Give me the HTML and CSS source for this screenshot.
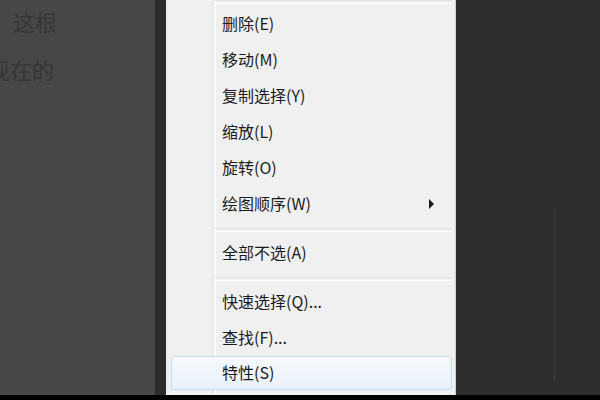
FILE: index.html
```html
<!DOCTYPE html>
<html lang="zh-CN">
<head>
  <meta charset="UTF-8" />
  <title>右键菜单</title>
  <link rel="stylesheet" href="styles.css">
</head>
<body>

<div class="screen">
  <div class="doc">
    <p class="doc-line first">这根</p>
    <p class="doc-line second">现在的</p>
  </div>

  <div class="edge"></div>

  <div class="menu">
    <div class="sep top"></div>
    <div class="item">删除(E)</div>
    <div class="item">移动(M)</div>
    <div class="item">复制选择(Y)</div>
    <div class="item">缩放(L)</div>
    <div class="item">旋转(O)</div>
    <div class="item has-sub">绘图顺序(W)<span class="arrow"></span></div>
    <div class="sep"></div>
    <div class="item">全部不选(A)</div>
    <div class="sep"></div>
    <div class="item">快速选择(Q)...</div>
    <div class="item">查找(F)...</div>
    <div class="item active">特性(S)</div>
  </div>

  <div class="canvas">
    <div class="cursor-line"></div>
  </div>
</div>
<div class="taskbar"></div>

</body>
</html>
```

FILE: styles.css
```css
* { box-sizing: border-box; }

body {
  margin: 0;
  width: 600px;
  height: 400px;
  overflow: hidden;
  font-family: "Noto Sans", "Noto Sans CJK SC", sans-serif;
  background-color: #000;
}

.screen {
  display: flex;
  height: 395px;
}

.taskbar {
  height: 5px;
  background-color: #000;
}

/* drawing area behind the menu */
.doc {
  width: 155px;
  background-color: #474747;
  overflow: hidden;
}

.doc-line {
  margin: 0;
  font-family: "Noto Sans CJK SC", sans-serif;
  font-size: 22px;
  line-height: 26px;
  color: #363636;
  white-space: nowrap;
}

.doc-line.first {
  margin-top: 8px;
  margin-left: 13px;
}

.doc-line.second {
  margin-top: 22px;
  margin-left: -12px;
}

.edge {
  width: 11px;
  background-color: #2c2c2c;
}

/* context menu */
.menu {
  position: relative;
  width: 290px;
  background-color: #f0f0f0;
  border-right: 1px solid #cfcfcf;
  padding-right: 3px;
}

.menu::before {
  content: "";
  position: absolute;
  top: 0;
  bottom: 0;
  left: 46px;
  width: 2px;
  border-left: 1px solid #e2e3e3;
  border-right: 1px solid #ffffff;
}

.sep {
  height: 13px;
  margin-left: 48px;
  position: relative;
}

.sep::after {
  content: "";
  position: absolute;
  left: 0;
  right: 0;
  top: 6px;
  height: 2px;
  border-top: 1px solid #e0e0e0;
  border-bottom: 1px solid #ffffff;
}

.sep.top {
  height: 6px;
}

.sep.top::after {
  top: 0;
}

.item {
  position: relative;
  height: 36px;
  line-height: 32px;
  padding-bottom: 4px;
  font-family: "Noto Sans CJK SC", sans-serif;
  font-size: 16px;
  color: #1b1b1b;
  border: 1px solid transparent;
  margin-left: 5px;
  padding-left: 50px;
}

.item.active {
  border-color: #c6dcf5;
  border-radius: 3px;
  background: linear-gradient(#f6f9fd, #eaf1fb);
  height: 34px;
  line-height: 30px;
  z-index: 1;
}

.arrow {
  position: absolute;
  right: 17px;
  top: 12px;
  width: 0;
  height: 0;
  border-left: 5px solid #1b1b1b;
  border-top: 5px solid transparent;
  border-bottom: 5px solid transparent;
}

/* dark drawing area on the right */
.canvas {
  flex: 1;
  background-color: #2e2e2e;
  padding-left: 98px;
  padding-top: 208px;
}

.cursor-line {
  width: 1px;
  height: 174px;
  background-color: #4a3434;
}
```
